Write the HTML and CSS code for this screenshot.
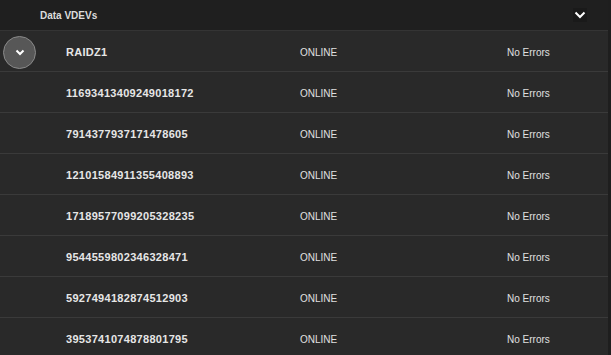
FILE: index.html
```html
<!DOCTYPE html>
<html lang="en">
<head>
    <meta charset="UTF-8">
    <title>Data VDEVs</title>
    <link rel="stylesheet" href="styles.css">
</head>
<body>

<div class="vdev-panel">
    <div class="vdev-header">
        <span class="vdev-title">Data VDEVs</span>
        <span class="header-toggle">
            <svg width="12" height="8" viewBox="0 0 12 8"><path d="M1.5 1.5 L6 6 L10.5 1.5" fill="none" stroke="#fff" stroke-width="2"/></svg>
        </span>
    </div>

    <div class="vdev-list" id="vdevList">
        <div class="vdev-row">
            <div class="expand-cell">
                <span class="expand-btn">
                    <svg width="10" height="7" viewBox="0 0 10 7"><path d="M1.5 1.5 L5 5 L8.5 1.5" fill="none" stroke="#fff" stroke-width="2"/></svg>
                </span>
            </div>
            <div class="vdev-name">RAIDZ1</div>
            <div class="vdev-status">ONLINE</div>
            <div class="vdev-errors">No Errors</div>
        </div>
    </div>
</div>

<script>
    const disks = [
        "11693413409249018172",
        "7914377937171478605",
        "12101584911355408893",
        "17189577099205328235",
        "9544559802346328471",
        "5927494182874512903",
        "3953741074878801795"
    ];

    const list = document.getElementById("vdevList");
    disks.forEach(id => {
        const row = document.createElement("div");
        row.className = "vdev-row";
        row.innerHTML = `
            <div class="expand-cell"></div>
            <div class="vdev-name">${id}</div>
            <div class="vdev-status">ONLINE</div>
            <div class="vdev-errors">No Errors</div>`;
        list.appendChild(row);
    });
</script>

</body>
</html>
```

FILE: styles.css
```css
body {
    margin: 0;
    padding: 0;
    background: #1e1e1e;
    font-family: 'Liberation Sans', Arial, sans-serif;
    color: #e2e2e2;
    overflow: hidden;
}

.vdev-panel {
    width: 608px;
}

.vdev-header {
    height: 30px;
    display: flex;
    align-items: center;
    justify-content: space-between;
    padding-left: 40px;
    padding-right: 21px;
    background: #1f1f1f;
    border-bottom: 1px solid #343434;
}

.vdev-title {
    font-size: 10px;
    font-weight: bold;
    color: #dcdcdc;
}

.header-toggle {
    display: flex;
    align-items: center;
    justify-content: center;
    width: 14px;
    height: 14px;
    background: #1a1a1a;
}

.vdev-list {
    background: #292929;
}

.vdev-row {
    display: grid;
    grid-template-columns: 66px 234px 207px 1fr;
    align-items: center;
    height: 38px;
    padding-top: 2px;
    border-bottom: 1px solid #3a3a3a;
}

.expand-cell {
    display: flex;
    align-items: center;
    padding-left: 3px;
}

.expand-btn {
    display: flex;
    align-items: center;
    justify-content: center;
    width: 31px;
    height: 31px;
    border-radius: 50%;
    background: #575757;
    border: 1px solid #8a8a8a;
}

.vdev-name {
    font-size: 11px;
    font-weight: bold;
    letter-spacing: 0.3px;
    color: #e6e6e6;
}

.vdev-status,
.vdev-errors {
    font-size: 10px;
    color: #e0e0e0;
}
```
